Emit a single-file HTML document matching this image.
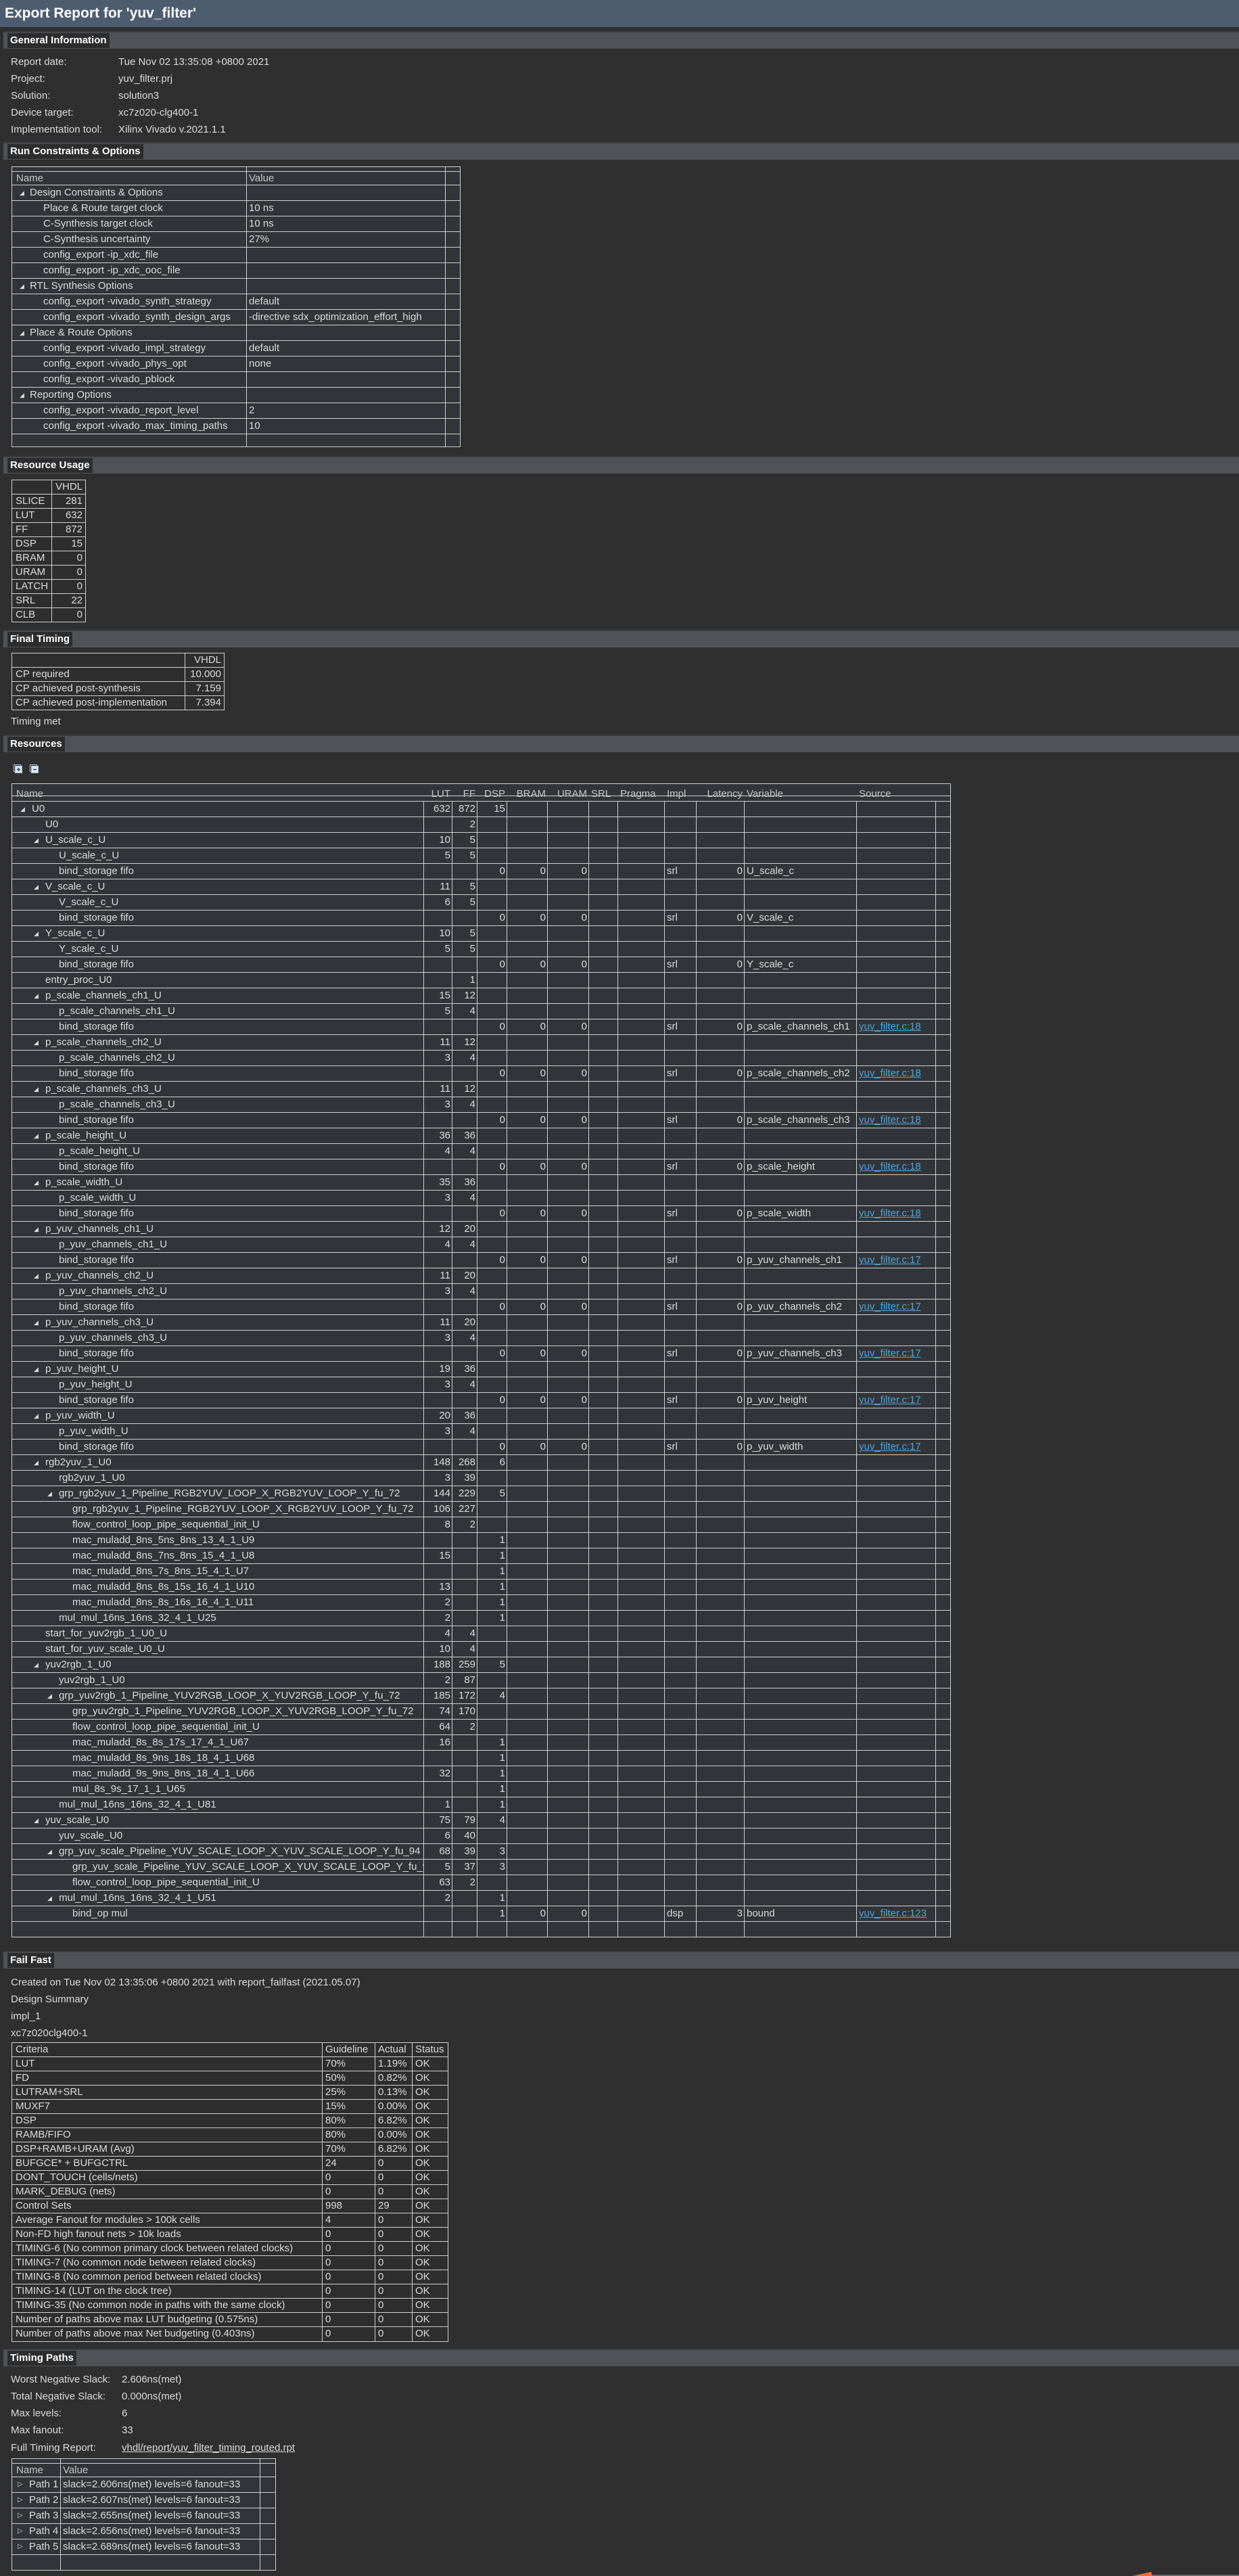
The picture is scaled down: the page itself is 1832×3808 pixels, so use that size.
<!DOCTYPE html>
<html><head><meta charset="utf-8"><style>
*{box-sizing:border-box;margin:0;padding:0}
body{width:1832px;height:3808px;background:#2f2f2f;font-family:"Liberation Sans",sans-serif;font-size:15px;color:#dcdcdc;position:relative;overflow:hidden}
.title{position:absolute;left:0;top:0;width:1832px;height:40px;background:#4d5d6f;color:#fff;font-weight:bold;font-size:21px;line-height:40px;padding-left:7px}
.bar{position:absolute;left:5px;width:1827px;height:26px;background:#4f5357;border-top:2px solid #3a3c3f}
.bar span{position:absolute;left:6px;top:1px;height:22px;line-height:22px;background:#2d2d2d;color:#fff;font-weight:bold;font-size:15px;padding:0 4px}
.ln{position:absolute;height:25px;line-height:25px;white-space:nowrap}
.tb{position:absolute;border:1px solid #d0d0d0;background:#2e2e2e}
.tb .r{position:relative;border-bottom:1px solid #d0d0d0;white-space:nowrap}
.tb .r:last-child{border-bottom:none}
.vl{position:absolute;top:0;bottom:0;width:1px;background:#d0d0d0}
.tree{background:#313438}
.tree .r{height:23px;line-height:22px}
.tree .r span{position:absolute;top:0;padding:0 3px;overflow:hidden}
.num{text-align:right}
.tri{position:absolute;font-size:9px;top:-2px;color:#ddd}
.lk{color:#4ea6dc;text-decoration:underline}
.s .r{height:21px;line-height:20px}
.s .r span{position:absolute;top:0;padding:0 5px}
/* resources columns */
#res .c1{left:609px;width:42px;text-align:right}
#res .c2{left:651px;width:37px;text-align:right}
#res .c3{left:688px;width:44px;text-align:right}
#res .c4{left:732px;width:60px;text-align:right}
#res .c5{left:792px;width:61px;text-align:right}
#res .c8{left:965px;width:47px}
#res .c9{left:1012px;width:71px;text-align:right}
#res .c10{left:1083px;width:166px}
#res .c11{left:1249px;width:117px}
.l0{left:26px}.l1{left:46px}.l2{left:66px}.l3{left:86px}
.hd{color:#c8c8c8}
</style></head><body>
<div class="title">Export Report for 'yuv_filter'</div>

<div class="bar" style="top:46px"><span>General Information</span></div>
<div class="ln" style="left:16px;top:79px">Report date:</div><div class="ln" style="left:175px;top:79px">Tue Nov 02 13:35:08 +0800 2021</div>
<div class="ln" style="left:16px;top:104px">Project:</div><div class="ln" style="left:175px;top:104px">yuv_filter.prj</div>
<div class="ln" style="left:16px;top:129px">Solution:</div><div class="ln" style="left:175px;top:129px">solution3</div>
<div class="ln" style="left:16px;top:154px">Device target:</div><div class="ln" style="left:175px;top:154px">xc7z020-clg400-1</div>
<div class="ln" style="left:16px;top:179px">Implementation tool:</div><div class="ln" style="left:175px;top:179px">Xilinx Vivado v.2021.1.1</div>

<div class="bar" style="top:210px"><span>Run Constraints &amp; Options</span></div>
<div class="tb tree" style="left:17px;top:246px;width:664px;height:415px">
<div class="vl" style="left:346px"></div><div class="vl" style="left:640px"></div>
<div class="r" style="height:7px"></div>
<div class="r hd" style="height:20px;line-height:19px"><span style="left:3px">Name</span><span style="left:347px">Value</span></div>
<div class="r"><span class="tri" style="left:8px">◢</span><span style="left:23px">Design Constraints &amp; Options</span></div>
<div class="r"><span style="left:43px">Place &amp; Route target clock</span><span style="left:347px">10 ns</span></div>
<div class="r"><span style="left:43px">C-Synthesis target clock</span><span style="left:347px">10 ns</span></div>
<div class="r"><span style="left:43px">C-Synthesis uncertainty</span><span style="left:347px">27%</span></div>
<div class="r"><span style="left:43px">config_export -ip_xdc_file</span></div>
<div class="r"><span style="left:43px">config_export -ip_xdc_ooc_file</span></div>
<div class="r"><span class="tri" style="left:8px">◢</span><span style="left:23px">RTL Synthesis Options</span></div>
<div class="r"><span style="left:43px">config_export -vivado_synth_strategy</span><span style="left:347px">default</span></div>
<div class="r"><span style="left:43px;width:304px">config_export -vivado_synth_design_args</span><span style="left:347px;width:293px">-directive sdx_optimization_effort_high</span></div>
<div class="r"><span class="tri" style="left:8px">◢</span><span style="left:23px">Place &amp; Route Options</span></div>
<div class="r"><span style="left:43px">config_export -vivado_impl_strategy</span><span style="left:347px">default</span></div>
<div class="r"><span style="left:43px">config_export -vivado_phys_opt</span><span style="left:347px">none</span></div>
<div class="r"><span style="left:43px">config_export -vivado_pblock</span></div>
<div class="r"><span class="tri" style="left:8px">◢</span><span style="left:23px">Reporting Options</span></div>
<div class="r"><span style="left:43px">config_export -vivado_report_level</span><span style="left:347px">2</span></div>
<div class="r"><span style="left:43px">config_export -vivado_max_timing_paths</span><span style="left:347px">10</span></div>
<div class="r"></div>
</div>

<div class="bar" style="top:674px"><span>Resource Usage</span></div>
<div class="tb s" style="left:17px;top:709px;width:110px;height:211px">
<div class="vl" style="left:58px"></div>
<div class="r"><span style="left:58px;width:51px;text-align:right">VHDL</span></div>
<div class="r"><span>SLICE</span><span style="left:58px;width:51px;text-align:right">281</span></div>
<div class="r"><span>LUT</span><span style="left:58px;width:51px;text-align:right">632</span></div>
<div class="r"><span>FF</span><span style="left:58px;width:51px;text-align:right">872</span></div>
<div class="r"><span>DSP</span><span style="left:58px;width:51px;text-align:right">15</span></div>
<div class="r"><span>BRAM</span><span style="left:58px;width:51px;text-align:right">0</span></div>
<div class="r"><span>URAM</span><span style="left:58px;width:51px;text-align:right">0</span></div>
<div class="r"><span>LATCH</span><span style="left:58px;width:51px;text-align:right">0</span></div>
<div class="r"><span>SRL</span><span style="left:58px;width:51px;text-align:right">22</span></div>
<div class="r"><span>CLB</span><span style="left:58px;width:51px;text-align:right">0</span></div>
</div>

<div class="bar" style="top:931px"><span>Final Timing</span></div>
<div class="tb s" style="left:17px;top:965px;width:315px;height:85px">
<div class="vl" style="left:255px"></div>
<div class="r"><span style="left:255px;width:59px;text-align:right">VHDL</span></div>
<div class="r"><span>CP required</span><span style="left:255px;width:59px;text-align:right">10.000</span></div>
<div class="r"><span>CP achieved post-synthesis</span><span style="left:255px;width:59px;text-align:right">7.159</span></div>
<div class="r"><span>CP achieved post-implementation</span><span style="left:255px;width:59px;text-align:right">7.394</span></div>
</div>
<div class="ln" style="left:16px;top:1054px">Timing met</div>

<div class="bar" style="top:1086px"><span>Resources</span></div>
<svg style="position:absolute;left:20px;top:1130px" width="40" height="14"><g fill="none" stroke="#a9c4e0"><rect x="0.5" y="0.5" width="10" height="10"/><rect x="2.5" y="2.5" width="10" height="10" fill="#dfe8f2"/><rect x="24.5" y="0.5" width="10" height="10"/><rect x="26.5" y="2.5" width="10" height="10" fill="#dfe8f2"/></g><path d="M5 7.5h5M7.5 5v5M29 7.5h5" stroke="#234a7a" stroke-width="1.5"/></svg>

<div id="res" class="tb tree" style="left:17px;top:1158px;width:1389px;height:1706px">
<div class="vl" style="left:608px"></div><div class="vl" style="left:650px"></div><div class="vl" style="left:687px"></div><div class="vl" style="left:731px"></div><div class="vl" style="left:791px"></div><div class="vl" style="left:852px"></div><div class="vl" style="left:895px"></div><div class="vl" style="left:964px"></div><div class="vl" style="left:1011px"></div><div class="vl" style="left:1082px"></div><div class="vl" style="left:1248px"></div><div class="vl" style="left:1365px"></div>
<div class="r" style="height:26px;line-height:30px;background:linear-gradient(#313438 17px,#d0d0d0 17px,#d0d0d0 18px,#313438 18px)"><span style="left:3px" class="hd">Name</span><span class="c1 hd">LUT</span><span class="c2 hd">FF</span><span class="c3 hd">DSP</span><span class="c4 hd">BRAM</span><span class="c5 hd">URAM</span><span style="left:853px" class="hd">SRL</span><span style="left:896px" class="hd">Pragma</span><span class="c8 hd">Impl</span><span class="c9 hd">Latency</span><span class="c10 hd">Variable</span><span class="c11 hd">Source</span></div>
<div class="r"><span class="tri" style="left:9px">◢</span><span class="l0">U0</span><span class="c1">632</span><span class="c2">872</span><span class="c3">15</span></div>
<div class="r"><span class="l1">U0</span><span class="c2">2</span></div>
<div class="r"><span class="tri" style="left:29px">◢</span><span class="l1">U_scale_c_U</span><span class="c1">10</span><span class="c2">5</span></div>
<div class="r"><span class="l2">U_scale_c_U</span><span class="c1">5</span><span class="c2">5</span></div>
<div class="r"><span class="l2">bind_storage fifo</span><span class="c3">0</span><span class="c4">0</span><span class="c5">0</span><span class="c8">srl</span><span class="c9">0</span><span class="c10">U_scale_c</span></div>
<div class="r"><span class="tri" style="left:29px">◢</span><span class="l1">V_scale_c_U</span><span class="c1">11</span><span class="c2">5</span></div>
<div class="r"><span class="l2">V_scale_c_U</span><span class="c1">6</span><span class="c2">5</span></div>
<div class="r"><span class="l2">bind_storage fifo</span><span class="c3">0</span><span class="c4">0</span><span class="c5">0</span><span class="c8">srl</span><span class="c9">0</span><span class="c10">V_scale_c</span></div>
<div class="r"><span class="tri" style="left:29px">◢</span><span class="l1">Y_scale_c_U</span><span class="c1">10</span><span class="c2">5</span></div>
<div class="r"><span class="l2">Y_scale_c_U</span><span class="c1">5</span><span class="c2">5</span></div>
<div class="r"><span class="l2">bind_storage fifo</span><span class="c3">0</span><span class="c4">0</span><span class="c5">0</span><span class="c8">srl</span><span class="c9">0</span><span class="c10">Y_scale_c</span></div>
<div class="r"><span class="l1">entry_proc_U0</span><span class="c2">1</span></div>
<div class="r"><span class="tri" style="left:29px">◢</span><span class="l1">p_scale_channels_ch1_U</span><span class="c1">15</span><span class="c2">12</span></div>
<div class="r"><span class="l2">p_scale_channels_ch1_U</span><span class="c1">5</span><span class="c2">4</span></div>
<div class="r"><span class="l2">bind_storage fifo</span><span class="c3">0</span><span class="c4">0</span><span class="c5">0</span><span class="c8">srl</span><span class="c9">0</span><span class="c10">p_scale_channels_ch1</span><span class="c11 lk">yuv_filter.c:18</span></div>
<div class="r"><span class="tri" style="left:29px">◢</span><span class="l1">p_scale_channels_ch2_U</span><span class="c1">11</span><span class="c2">12</span></div>
<div class="r"><span class="l2">p_scale_channels_ch2_U</span><span class="c1">3</span><span class="c2">4</span></div>
<div class="r"><span class="l2">bind_storage fifo</span><span class="c3">0</span><span class="c4">0</span><span class="c5">0</span><span class="c8">srl</span><span class="c9">0</span><span class="c10">p_scale_channels_ch2</span><span class="c11 lk">yuv_filter.c:18</span></div>
<div class="r"><span class="tri" style="left:29px">◢</span><span class="l1">p_scale_channels_ch3_U</span><span class="c1">11</span><span class="c2">12</span></div>
<div class="r"><span class="l2">p_scale_channels_ch3_U</span><span class="c1">3</span><span class="c2">4</span></div>
<div class="r"><span class="l2">bind_storage fifo</span><span class="c3">0</span><span class="c4">0</span><span class="c5">0</span><span class="c8">srl</span><span class="c9">0</span><span class="c10">p_scale_channels_ch3</span><span class="c11 lk">yuv_filter.c:18</span></div>
<div class="r"><span class="tri" style="left:29px">◢</span><span class="l1">p_scale_height_U</span><span class="c1">36</span><span class="c2">36</span></div>
<div class="r"><span class="l2">p_scale_height_U</span><span class="c1">4</span><span class="c2">4</span></div>
<div class="r"><span class="l2">bind_storage fifo</span><span class="c3">0</span><span class="c4">0</span><span class="c5">0</span><span class="c8">srl</span><span class="c9">0</span><span class="c10">p_scale_height</span><span class="c11 lk">yuv_filter.c:18</span></div>
<div class="r"><span class="tri" style="left:29px">◢</span><span class="l1">p_scale_width_U</span><span class="c1">35</span><span class="c2">36</span></div>
<div class="r"><span class="l2">p_scale_width_U</span><span class="c1">3</span><span class="c2">4</span></div>
<div class="r"><span class="l2">bind_storage fifo</span><span class="c3">0</span><span class="c4">0</span><span class="c5">0</span><span class="c8">srl</span><span class="c9">0</span><span class="c10">p_scale_width</span><span class="c11 lk">yuv_filter.c:18</span></div>
<div class="r"><span class="tri" style="left:29px">◢</span><span class="l1">p_yuv_channels_ch1_U</span><span class="c1">12</span><span class="c2">20</span></div>
<div class="r"><span class="l2">p_yuv_channels_ch1_U</span><span class="c1">4</span><span class="c2">4</span></div>
<div class="r"><span class="l2">bind_storage fifo</span><span class="c3">0</span><span class="c4">0</span><span class="c5">0</span><span class="c8">srl</span><span class="c9">0</span><span class="c10">p_yuv_channels_ch1</span><span class="c11 lk">yuv_filter.c:17</span></div>
<div class="r"><span class="tri" style="left:29px">◢</span><span class="l1">p_yuv_channels_ch2_U</span><span class="c1">11</span><span class="c2">20</span></div>
<div class="r"><span class="l2">p_yuv_channels_ch2_U</span><span class="c1">3</span><span class="c2">4</span></div>
<div class="r"><span class="l2">bind_storage fifo</span><span class="c3">0</span><span class="c4">0</span><span class="c5">0</span><span class="c8">srl</span><span class="c9">0</span><span class="c10">p_yuv_channels_ch2</span><span class="c11 lk">yuv_filter.c:17</span></div>
<div class="r"><span class="tri" style="left:29px">◢</span><span class="l1">p_yuv_channels_ch3_U</span><span class="c1">11</span><span class="c2">20</span></div>
<div class="r"><span class="l2">p_yuv_channels_ch3_U</span><span class="c1">3</span><span class="c2">4</span></div>
<div class="r"><span class="l2">bind_storage fifo</span><span class="c3">0</span><span class="c4">0</span><span class="c5">0</span><span class="c8">srl</span><span class="c9">0</span><span class="c10">p_yuv_channels_ch3</span><span class="c11 lk">yuv_filter.c:17</span></div>
<div class="r"><span class="tri" style="left:29px">◢</span><span class="l1">p_yuv_height_U</span><span class="c1">19</span><span class="c2">36</span></div>
<div class="r"><span class="l2">p_yuv_height_U</span><span class="c1">3</span><span class="c2">4</span></div>
<div class="r"><span class="l2">bind_storage fifo</span><span class="c3">0</span><span class="c4">0</span><span class="c5">0</span><span class="c8">srl</span><span class="c9">0</span><span class="c10">p_yuv_height</span><span class="c11 lk">yuv_filter.c:17</span></div>
<div class="r"><span class="tri" style="left:29px">◢</span><span class="l1">p_yuv_width_U</span><span class="c1">20</span><span class="c2">36</span></div>
<div class="r"><span class="l2">p_yuv_width_U</span><span class="c1">3</span><span class="c2">4</span></div>
<div class="r"><span class="l2">bind_storage fifo</span><span class="c3">0</span><span class="c4">0</span><span class="c5">0</span><span class="c8">srl</span><span class="c9">0</span><span class="c10">p_yuv_width</span><span class="c11 lk">yuv_filter.c:17</span></div>
<div class="r"><span class="tri" style="left:29px">◢</span><span class="l1">rgb2yuv_1_U0</span><span class="c1">148</span><span class="c2">268</span><span class="c3">6</span></div>
<div class="r"><span class="l2">rgb2yuv_1_U0</span><span class="c1">3</span><span class="c2">39</span></div>
<div class="r"><span class="tri" style="left:49px">◢</span><span class="l2">grp_rgb2yuv_1_Pipeline_RGB2YUV_LOOP_X_RGB2YUV_LOOP_Y_fu_72</span><span class="c1">144</span><span class="c2">229</span><span class="c3">5</span></div>
<div class="r"><span class="l3">grp_rgb2yuv_1_Pipeline_RGB2YUV_LOOP_X_RGB2YUV_LOOP_Y_fu_72</span><span class="c1">106</span><span class="c2">227</span></div>
<div class="r"><span class="l3">flow_control_loop_pipe_sequential_init_U</span><span class="c1">8</span><span class="c2">2</span></div>
<div class="r"><span class="l3">mac_muladd_8ns_5ns_8ns_13_4_1_U9</span><span class="c3">1</span></div>
<div class="r"><span class="l3">mac_muladd_8ns_7ns_8ns_15_4_1_U8</span><span class="c1">15</span><span class="c3">1</span></div>
<div class="r"><span class="l3">mac_muladd_8ns_7s_8ns_15_4_1_U7</span><span class="c3">1</span></div>
<div class="r"><span class="l3">mac_muladd_8ns_8s_15s_16_4_1_U10</span><span class="c1">13</span><span class="c3">1</span></div>
<div class="r"><span class="l3">mac_muladd_8ns_8s_16s_16_4_1_U11</span><span class="c1">2</span><span class="c3">1</span></div>
<div class="r"><span class="l2">mul_mul_16ns_16ns_32_4_1_U25</span><span class="c1">2</span><span class="c3">1</span></div>
<div class="r"><span class="l1">start_for_yuv2rgb_1_U0_U</span><span class="c1">4</span><span class="c2">4</span></div>
<div class="r"><span class="l1">start_for_yuv_scale_U0_U</span><span class="c1">10</span><span class="c2">4</span></div>
<div class="r"><span class="tri" style="left:29px">◢</span><span class="l1">yuv2rgb_1_U0</span><span class="c1">188</span><span class="c2">259</span><span class="c3">5</span></div>
<div class="r"><span class="l2">yuv2rgb_1_U0</span><span class="c1">2</span><span class="c2">87</span></div>
<div class="r"><span class="tri" style="left:49px">◢</span><span class="l2">grp_yuv2rgb_1_Pipeline_YUV2RGB_LOOP_X_YUV2RGB_LOOP_Y_fu_72</span><span class="c1">185</span><span class="c2">172</span><span class="c3">4</span></div>
<div class="r"><span class="l3">grp_yuv2rgb_1_Pipeline_YUV2RGB_LOOP_X_YUV2RGB_LOOP_Y_fu_72</span><span class="c1">74</span><span class="c2">170</span></div>
<div class="r"><span class="l3">flow_control_loop_pipe_sequential_init_U</span><span class="c1">64</span><span class="c2">2</span></div>
<div class="r"><span class="l3">mac_muladd_8s_8s_17s_17_4_1_U67</span><span class="c1">16</span><span class="c3">1</span></div>
<div class="r"><span class="l3">mac_muladd_8s_9ns_18s_18_4_1_U68</span><span class="c3">1</span></div>
<div class="r"><span class="l3">mac_muladd_9s_9ns_8ns_18_4_1_U66</span><span class="c1">32</span><span class="c3">1</span></div>
<div class="r"><span class="l3">mul_8s_9s_17_1_1_U65</span><span class="c3">1</span></div>
<div class="r"><span class="l2">mul_mul_16ns_16ns_32_4_1_U81</span><span class="c1">1</span><span class="c3">1</span></div>
<div class="r"><span class="tri" style="left:29px">◢</span><span class="l1">yuv_scale_U0</span><span class="c1">75</span><span class="c2">79</span><span class="c3">4</span></div>
<div class="r"><span class="l2">yuv_scale_U0</span><span class="c1">6</span><span class="c2">40</span></div>
<div class="r"><span class="tri" style="left:49px">◢</span><span class="l2">grp_yuv_scale_Pipeline_YUV_SCALE_LOOP_X_YUV_SCALE_LOOP_Y_fu_94</span><span class="c1">68</span><span class="c2">39</span><span class="c3">3</span></div>
<div class="r"><span class="l3" style="width:523px">grp_yuv_scale_Pipeline_YUV_SCALE_LOOP_X_YUV_SCALE_LOOP_Y_fu_94</span><span class="c1">5</span><span class="c2">37</span><span class="c3">3</span></div>
<div class="r"><span class="l3">flow_control_loop_pipe_sequential_init_U</span><span class="c1">63</span><span class="c2">2</span></div>
<div class="r"><span class="tri" style="left:49px">◢</span><span class="l2">mul_mul_16ns_16ns_32_4_1_U51</span><span class="c1">2</span><span class="c3">1</span></div>
<div class="r"><span class="l3">bind_op mul</span><span class="c3">1</span><span class="c4">0</span><span class="c5">0</span><span class="c8">dsp</span><span class="c9">3</span><span class="c10">bound</span><span class="c11 lk">yuv_filter.c:123</span></div>
<div class="r"></div>
</div>

<div class="bar" style="top:2884px"><span>Fail Fast</span></div>
<div class="ln" style="left:16px;top:2918px">Created on Tue Nov 02 13:35:06 +0800 2021 with report_failfast (2021.05.07)</div>
<div class="ln" style="left:16px;top:2943px">Design Summary</div>
<div class="ln" style="left:16px;top:2968px">impl_1</div>
<div class="ln" style="left:16px;top:2993px">xc7z020clg400-1</div>
<div class="tb s" style="left:17px;top:3019px;width:646px;height:443px">
<div class="vl" style="left:458px"></div><div class="vl" style="left:536px"></div><div class="vl" style="left:591px"></div>
<div class="r"><span>Criteria</span><span style="left:458px">Guideline</span><span style="left:536px">Actual</span><span style="left:591px">Status</span></div>
<div class="r"><span>LUT</span><span style="left:458px">70%</span><span style="left:536px">1.19%</span><span style="left:591px">OK</span></div>
<div class="r"><span>FD</span><span style="left:458px">50%</span><span style="left:536px">0.82%</span><span style="left:591px">OK</span></div>
<div class="r"><span>LUTRAM+SRL</span><span style="left:458px">25%</span><span style="left:536px">0.13%</span><span style="left:591px">OK</span></div>
<div class="r"><span>MUXF7</span><span style="left:458px">15%</span><span style="left:536px">0.00%</span><span style="left:591px">OK</span></div>
<div class="r"><span>DSP</span><span style="left:458px">80%</span><span style="left:536px">6.82%</span><span style="left:591px">OK</span></div>
<div class="r"><span>RAMB/FIFO</span><span style="left:458px">80%</span><span style="left:536px">0.00%</span><span style="left:591px">OK</span></div>
<div class="r"><span>DSP+RAMB+URAM (Avg)</span><span style="left:458px">70%</span><span style="left:536px">6.82%</span><span style="left:591px">OK</span></div>
<div class="r"><span>BUFGCE* + BUFGCTRL</span><span style="left:458px">24</span><span style="left:536px">0</span><span style="left:591px">OK</span></div>
<div class="r"><span>DONT_TOUCH (cells/nets)</span><span style="left:458px">0</span><span style="left:536px">0</span><span style="left:591px">OK</span></div>
<div class="r"><span>MARK_DEBUG (nets)</span><span style="left:458px">0</span><span style="left:536px">0</span><span style="left:591px">OK</span></div>
<div class="r"><span>Control Sets</span><span style="left:458px">998</span><span style="left:536px">29</span><span style="left:591px">OK</span></div>
<div class="r"><span>Average Fanout for modules &gt; 100k cells</span><span style="left:458px">4</span><span style="left:536px">0</span><span style="left:591px">OK</span></div>
<div class="r"><span>Non-FD high fanout nets &gt; 10k loads</span><span style="left:458px">0</span><span style="left:536px">0</span><span style="left:591px">OK</span></div>
<div class="r"><span>TIMING-6 (No common primary clock between related clocks)</span><span style="left:458px">0</span><span style="left:536px">0</span><span style="left:591px">OK</span></div>
<div class="r"><span>TIMING-7 (No common node between related clocks)</span><span style="left:458px">0</span><span style="left:536px">0</span><span style="left:591px">OK</span></div>
<div class="r"><span>TIMING-8 (No common period between related clocks)</span><span style="left:458px">0</span><span style="left:536px">0</span><span style="left:591px">OK</span></div>
<div class="r"><span>TIMING-14 (LUT on the clock tree)</span><span style="left:458px">0</span><span style="left:536px">0</span><span style="left:591px">OK</span></div>
<div class="r"><span>TIMING-35 (No common node in paths with the same clock)</span><span style="left:458px">0</span><span style="left:536px">0</span><span style="left:591px">OK</span></div>
<div class="r"><span>Number of paths above max LUT budgeting (0.575ns)</span><span style="left:458px">0</span><span style="left:536px">0</span><span style="left:591px">OK</span></div>
<div class="r"><span>Number of paths above max Net budgeting (0.403ns)</span><span style="left:458px">0</span><span style="left:536px">0</span><span style="left:591px">OK</span></div>
</div>

<div class="bar" style="top:3472px"><span>Timing Paths</span></div>
<div class="ln" style="left:16px;top:3505px">Worst Negative Slack:</div><div class="ln" style="left:180px;top:3505px">2.606ns(met)</div>
<div class="ln" style="left:16px;top:3530px">Total Negative Slack:</div><div class="ln" style="left:180px;top:3530px">0.000ns(met)</div>
<div class="ln" style="left:16px;top:3555px">Max levels:</div><div class="ln" style="left:180px;top:3555px">6</div>
<div class="ln" style="left:16px;top:3580px">Max fanout:</div><div class="ln" style="left:180px;top:3580px">33</div>
<div class="ln" style="left:16px;top:3606px">Full Timing Report:</div><div class="ln" style="left:180px;top:3606px;text-decoration:underline">vhdl/report/yuv_filter_timing_routed.rpt</div>
<div class="tb tree" style="left:17px;top:3634px;width:391px;height:166px">
<div class="vl" style="left:71px"></div><div class="vl" style="left:366px"></div>
<div class="r" style="height:7px"></div>
<div class="r hd" style="height:20px;line-height:19px"><span style="left:3px">Name</span><span style="left:72px">Value</span></div>
<div class="r"><span class="tri" style="left:5px;font-size:10px;top:0">▷</span><span style="left:22px">Path 1</span><span style="left:72px">slack=2.606ns(met) levels=6 fanout=33</span></div>
<div class="r"><span class="tri" style="left:5px;font-size:10px;top:0">▷</span><span style="left:22px">Path 2</span><span style="left:72px">slack=2.607ns(met) levels=6 fanout=33</span></div>
<div class="r"><span class="tri" style="left:5px;font-size:10px;top:0">▷</span><span style="left:22px">Path 3</span><span style="left:72px">slack=2.655ns(met) levels=6 fanout=33</span></div>
<div class="r"><span class="tri" style="left:5px;font-size:10px;top:0">▷</span><span style="left:22px">Path 4</span><span style="left:72px">slack=2.656ns(met) levels=6 fanout=33</span></div>
<div class="r"><span class="tri" style="left:5px;font-size:10px;top:0">▷</span><span style="left:22px">Path 5</span><span style="left:72px">slack=2.689ns(met) levels=6 fanout=33</span></div>
<div class="r"></div>
</div>
<div style="position:absolute;left:1700px;top:3806px;width:132px;height:2px;background:#6a6a6a"></div>
<svg style="position:absolute;left:1672px;top:3800px" width="32" height="8"><path d="M2 8 L30 2 L32 8 Z" fill="#f07030"/></svg>
</body></html>
